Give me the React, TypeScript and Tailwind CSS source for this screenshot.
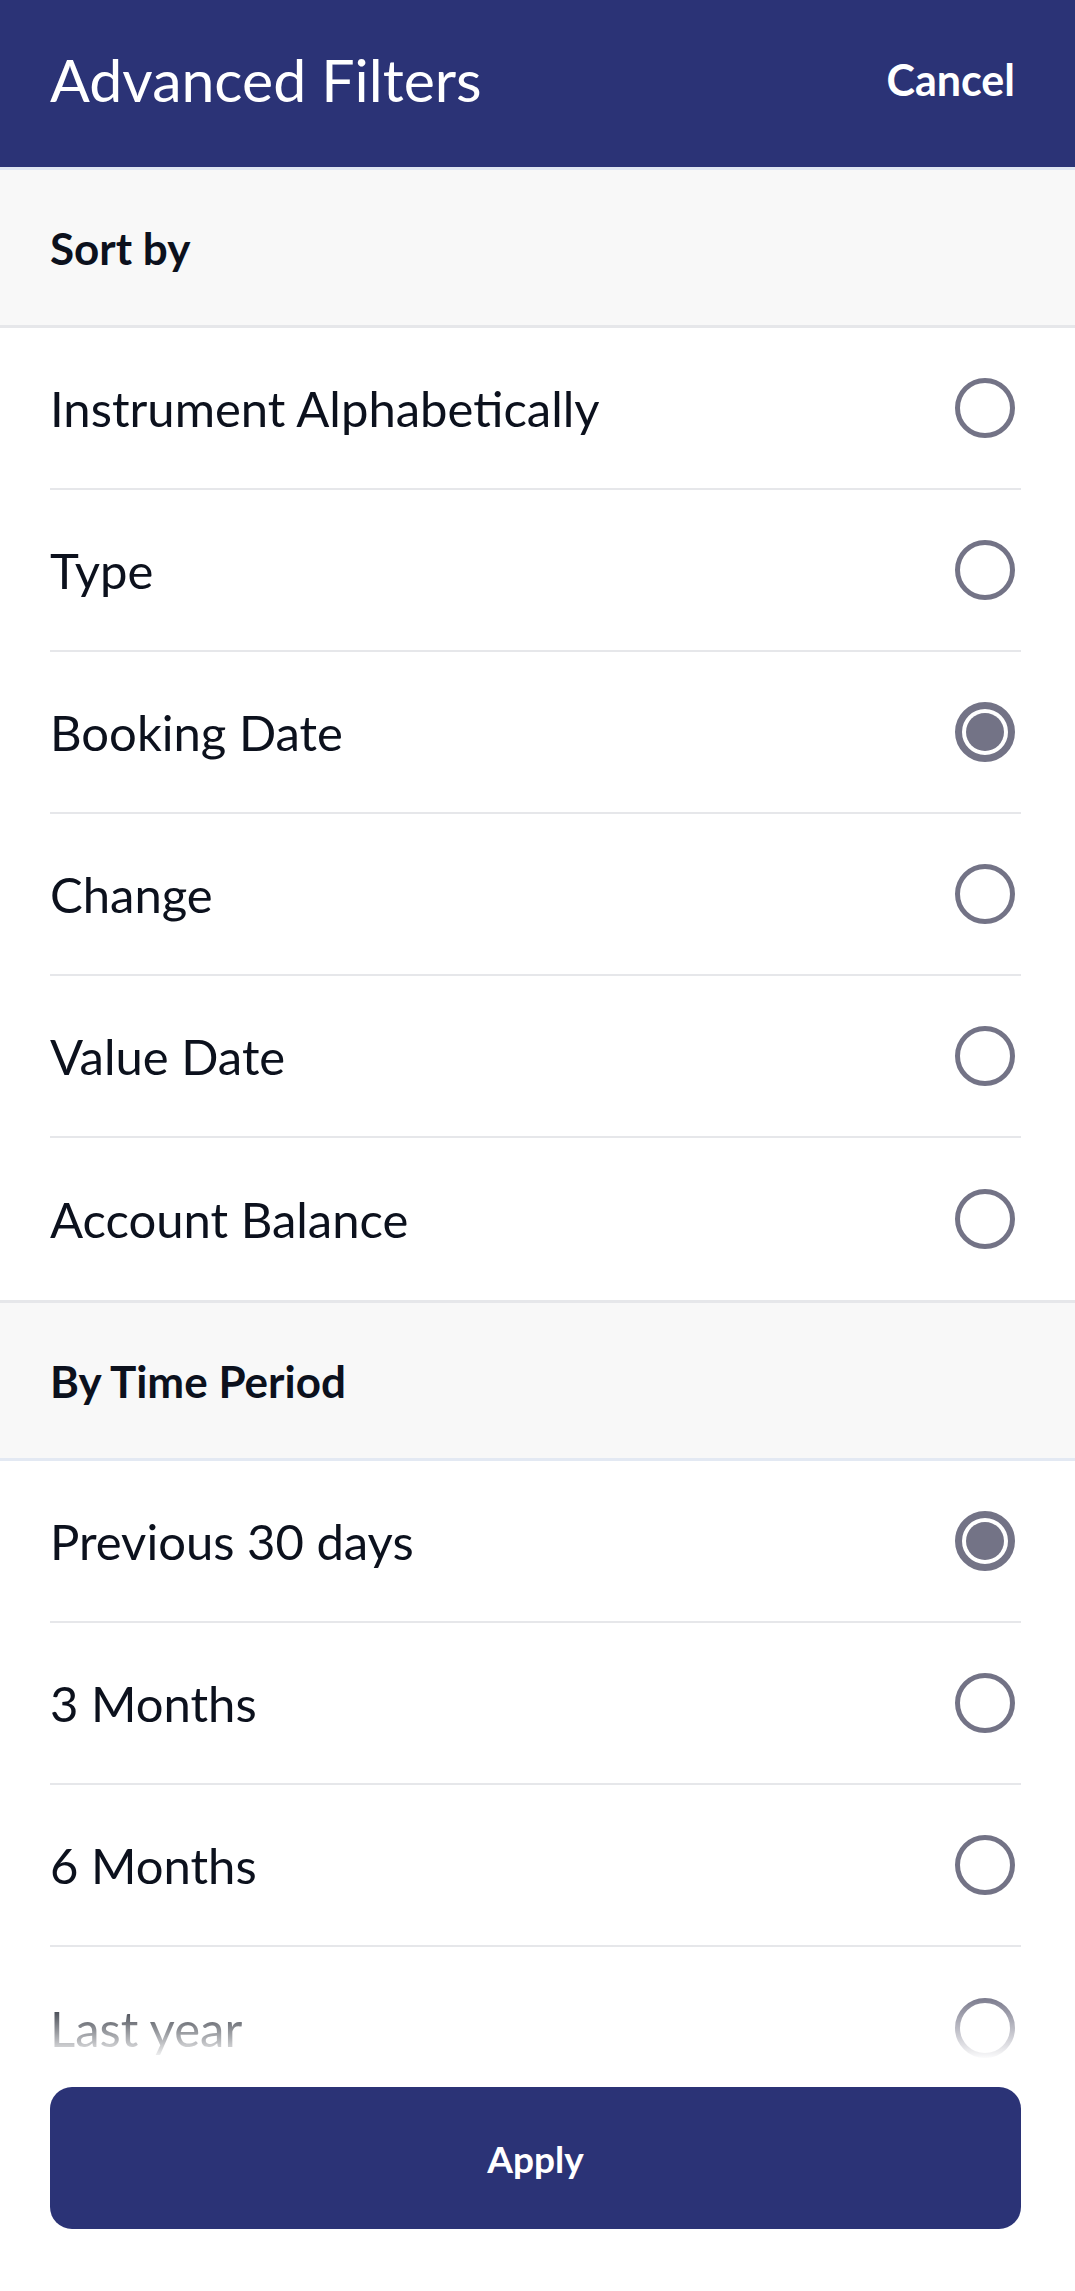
import React from "react";

type Option = { label: string; selected?: boolean };

const SORT_OPTIONS: Option[] = [
  { label: "Instrument Alphabetically" },
  { label: "Type" },
  { label: "Booking Date", selected: true },
  { label: "Change" },
  { label: "Value Date" },
  { label: "Account Balance" },
];

const PERIOD_OPTIONS: Option[] = [
  { label: "Previous 30 days", selected: true },
  { label: "3 Months" },
  { label: "6 Months" },
  { label: "Last year" },
];

function Radio({ selected }: { selected?: boolean }) {
  if (selected) {
    return (
      <span className="mr-[6px] flex h-[60px] w-[60px] items-center justify-center rounded-full border-[7px] border-[#737386]">
        <span className="h-[38px] w-[38px] rounded-full bg-[#737386]" />
      </span>
    );
  }
  return <span className="mr-[6px] h-[60px] w-[60px] rounded-full border-[5px] border-[#737386]" />;
}

function OptionRow({ option, last }: { option: Option; last?: boolean }) {
  return (
    <div
      className={
        last
          ? "flex h-[162px] items-center justify-between"
          : "flex h-[162px] items-center justify-between border-b-2 border-[#e6e7ea]"
      }
    >
      <span className="text-[49px] leading-none text-[#0c111d]">{option.label}</span>
      <Radio selected={option.selected} />
    </div>
  );
}

function SectionHeader({ title, top, bottom }: { title: string; top: string; bottom: string }) {
  return (
    <div className={`flex h-[161px] items-center border-y-[3px] bg-[#f8f8f8] px-[50px] ${top} ${bottom}`}>
      <span className="text-[44px] font-bold leading-none text-[#0c111d]">{title}</span>
    </div>
  );
}

export default function App() {
  return (
    <div className="relative flex h-[2291px] w-full flex-col overflow-hidden bg-white font-['Lato',sans-serif]">
      <header className="flex h-[167px] shrink-0 items-center justify-between bg-[#2b3376] pb-[8px] pl-[50px] pr-[60px]">
        <h1 className="text-[59px] font-normal leading-none text-white">Advanced Filters</h1>
        <button type="button" className="text-[43px] font-bold leading-none text-white">
          Cancel
        </button>
      </header>

      <SectionHeader title="Sort by" top="border-t-[#dfe6f2]" bottom="border-b-[#e6e7ea]" />
      <div className="pl-[50px] pr-[54px]">
        {SORT_OPTIONS.map((o, i) => (
          <OptionRow key={o.label} option={o} last={i === SORT_OPTIONS.length - 1} />
        ))}
      </div>

      <SectionHeader title="By Time Period" top="border-t-[#e6e7ea]" bottom="border-b-[#e3e9f3]" />
      <div className="pl-[50px] pr-[54px]">
        {PERIOD_OPTIONS.map((o, i) => (
          <OptionRow key={o.label} option={o} last={i === PERIOD_OPTIONS.length - 1} />
        ))}
      </div>

      {/* sticky footer fades the list out above the Apply button */}
      <div className="absolute inset-x-0 bottom-0 flex flex-col">
        <div className="h-[66px] bg-gradient-to-b from-white/0 to-white" />
        <div className="bg-white pb-[62px] pl-[50px] pr-[54px] pt-[27px]">
          <button
            type="button"
            className="flex h-[142px] w-full items-center justify-center rounded-[22px] bg-[#2b3376] text-[37px] font-bold leading-none text-white"
          >
            Apply
          </button>
        </div>
      </div>
    </div>
  );
}
